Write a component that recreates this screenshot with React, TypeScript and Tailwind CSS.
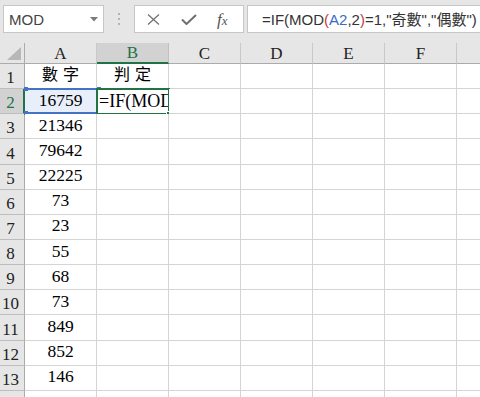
import React from "react";

const serif = { fontFamily: '"Liberation Serif", "Times New Roman", serif' };
const cjk = { fontFamily: '"Liberation Serif", "Noto Sans CJK TC", serif' };

const colLetters = ["A", "B", "C", "D", "E", "F", "G"];
const aValues = ["數字", "16759", "21346", "79642", "22225", "73", "23", "55", "68", "73", "849", "852", "146", ""];

function Toolbar() {
  return (
    <div className="h-[43px] bg-[#e6e6e6] flex items-start pt-[5px] pl-[3px]">
      <div className="w-[101px] h-[28px] border border-[#c6c6c6] bg-white flex items-center justify-between pl-[5px] pr-[5px]">
        <span className="text-[15px] text-[#444] leading-none" style={{ fontFamily: '"Liberation Sans", Arial, sans-serif' }}>
          MOD
        </span>
        <svg width="8" height="5" viewBox="0 0 8 5">
          <path d="M0 0 L8 0 L4 4.5 Z" fill="#7b7b7b" />
        </svg>
      </div>
      <div className="w-[30px] h-[28px] flex flex-col items-center justify-center gap-[3px]">
        <div className="w-[2px] h-[2px] bg-[#b3b3b3]" />
        <div className="w-[2px] h-[2px] bg-[#b3b3b3]" />
        <div className="w-[2px] h-[2px] bg-[#b3b3b3]" />
      </div>
      <div className="w-[110px] h-[28px] border border-[#c6c6c6] bg-white flex items-center">
        <svg className="ml-[12px]" width="13" height="11" viewBox="0 0 13 11">
          <path d="M1 0.5 L12 10.5 M12 0.5 L1 10.5" stroke="#6f6f6f" strokeWidth="1.2" fill="none" />
        </svg>
        <svg className="ml-[21px]" width="16" height="11" viewBox="0 0 16 11">
          <path d="M1 5.5 L5.5 10 L15 1" stroke="#6f6f6f" strokeWidth="2" fill="none" />
        </svg>
        <span className="ml-[20px] text-[17px] italic text-[#555] leading-none" style={serif}>
          f<span className="text-[13px]">x</span>
        </span>
      </div>
      <div className="ml-[3px] flex-1 h-[28px] border border-[#c6c6c6] border-r-0 bg-white flex items-center pl-[14px] overflow-hidden whitespace-nowrap">
        <span className="text-[15px] text-[#333] leading-none" style={{ fontFamily: '"Liberation Sans", "Noto Sans CJK TC", sans-serif' }}>
          =IF(MOD<span className="text-[#c43b3b]">(</span>
          <span className="text-[#3b6cc4]">A2</span>,2<span className="text-[#c43b3b]">)</span>=1,"奇數","偶數")
        </span>
      </div>
    </div>
  );
}

function HeaderRow() {
  return (
    <div className="flex h-[21px]">
      <div className="w-[25px] shrink-0 h-full bg-[#e6e6e6] border-r border-b border-[#ababab] relative">
        <svg className="absolute right-[3px] bottom-[3px]" width="14" height="13" viewBox="0 0 14 13">
          <path d="M14 0 L14 13 L0 13 Z" fill="#b7b7b7" />
        </svg>
      </div>
      {colLetters.map((c) => {
        const sel = c === "B";
        return (
          <div
            key={c}
            className={
              sel
                ? "w-[72px] shrink-0 h-full bg-[#d2d2d2] border-r border-[#c0c0c0] border-b-2 border-b-[#217346] flex items-center justify-center text-[17px] text-[#217346]"
                : "w-[72px] shrink-0 h-full bg-[#e6e6e6] border-r border-[#c8c8c8] border-b border-b-[#ababab] flex items-center justify-center text-[17px] text-[#222]"
            }
            style={serif}
          >
            <span className="leading-none">{c}</span>
          </div>
        );
      })}
    </div>
  );
}

function Row({ idx, value }: { idx: number; value: string }) {
  const rowNum = idx + 1;
  const selRow = rowNum === 2;
  return (
    <div className="flex h-[25.15px]">
      <div
        className={
          selRow
            ? "w-[25px] shrink-0 h-full bg-[#d2d2d2] border-b border-[#bdbdbd] border-r-2 border-r-[#217346] flex items-end justify-center pb-[2px] pr-[2px] text-[17px] text-[#217346]"
            : "w-[25px] shrink-0 h-full bg-[#e6e6e6] border-b border-[#bdbdbd] border-r border-r-[#ababab] flex items-end justify-center pb-[2px] pr-[3px] text-[17px] text-[#222]"
        }
        style={serif}
      >
        <span className="leading-none">{rowNum}</span>
      </div>
      {colLetters.map((c) => {
        const isA = c === "A";
        const isB = c === "B";
        const a2 = isA && selRow;
        const b2 = isB && selRow;
        let content: React.ReactNode = null;
        if (isA && value) {
          if (rowNum === 1) {
            content = (
              <span className="text-[16px] tracking-[5px] pl-[5px] leading-none mb-[1px]" style={cjk}>
                {value}
              </span>
            );
          } else {
            content = (
              <span className="text-[17.5px] leading-none" style={serif}>
                {value}
              </span>
            );
          }
        }
        if (isB && rowNum === 1) {
          content = (
            <span className="text-[16px] tracking-[5px] pl-[5px] leading-none mb-[1px]" style={cjk}>
              判定
            </span>
          );
        }
        return (
          <div
            key={c}
            className={
              "w-[72px] shrink-0 h-full border-r border-b border-[#d4d4d4] relative flex items-end pb-[4px] text-black " +
              (a2 ? "bg-[#e8effb] justify-center" : "bg-white justify-center")
            }
          >
            {content}
            {a2 && (
              <div className="absolute left-0 top-[-1px] w-[73px] h-[26px] border-y-2 border-[#4472c4] pointer-events-none">
                <div className="absolute left-[-1px] top-[-3px] w-[4px] h-[4px] bg-[#4472c4]" />
                <div className="absolute right-[-3px] top-[-3px] w-[4px] h-[4px] bg-[#4472c4]" />
                <div className="absolute left-[-1px] bottom-[-3px] w-[4px] h-[4px] bg-[#4472c4]" />
                <div className="absolute right-[-3px] bottom-[-3px] w-[4px] h-[4px] bg-[#4472c4]" />
              </div>
            )}
            {b2 && (
              <>
                <div className="absolute left-0 top-0 right-0 bottom-0 flex items-end pb-[3px] pl-[2px] overflow-hidden bg-white">
                  <span className="text-[18px] leading-none whitespace-nowrap" style={serif}>
                    =IF(MOD(A2,2)=1,"奇數","偶數")
                  </span>
                </div>
                <div className="absolute left-[-1px] top-[-1px] w-[74px] h-[27px] border-2 border-[#217346] pointer-events-none">
                  <div className="absolute right-[-5px] bottom-[-5px] w-[7px] h-[7px] bg-[#217346] border border-white" />
                </div>
              </>
            )}
          </div>
        );
      })}
    </div>
  );
}

export default function App() {
  return (
    <div className="w-[480px] h-[397px] overflow-hidden bg-white select-none">
      <Toolbar />
      <div className="flex flex-col w-[529px]">
        <HeaderRow />
        {aValues.map((v, i) => (
          <Row key={i} idx={i} value={v} />
        ))}
      </div>
    </div>
  );
}
